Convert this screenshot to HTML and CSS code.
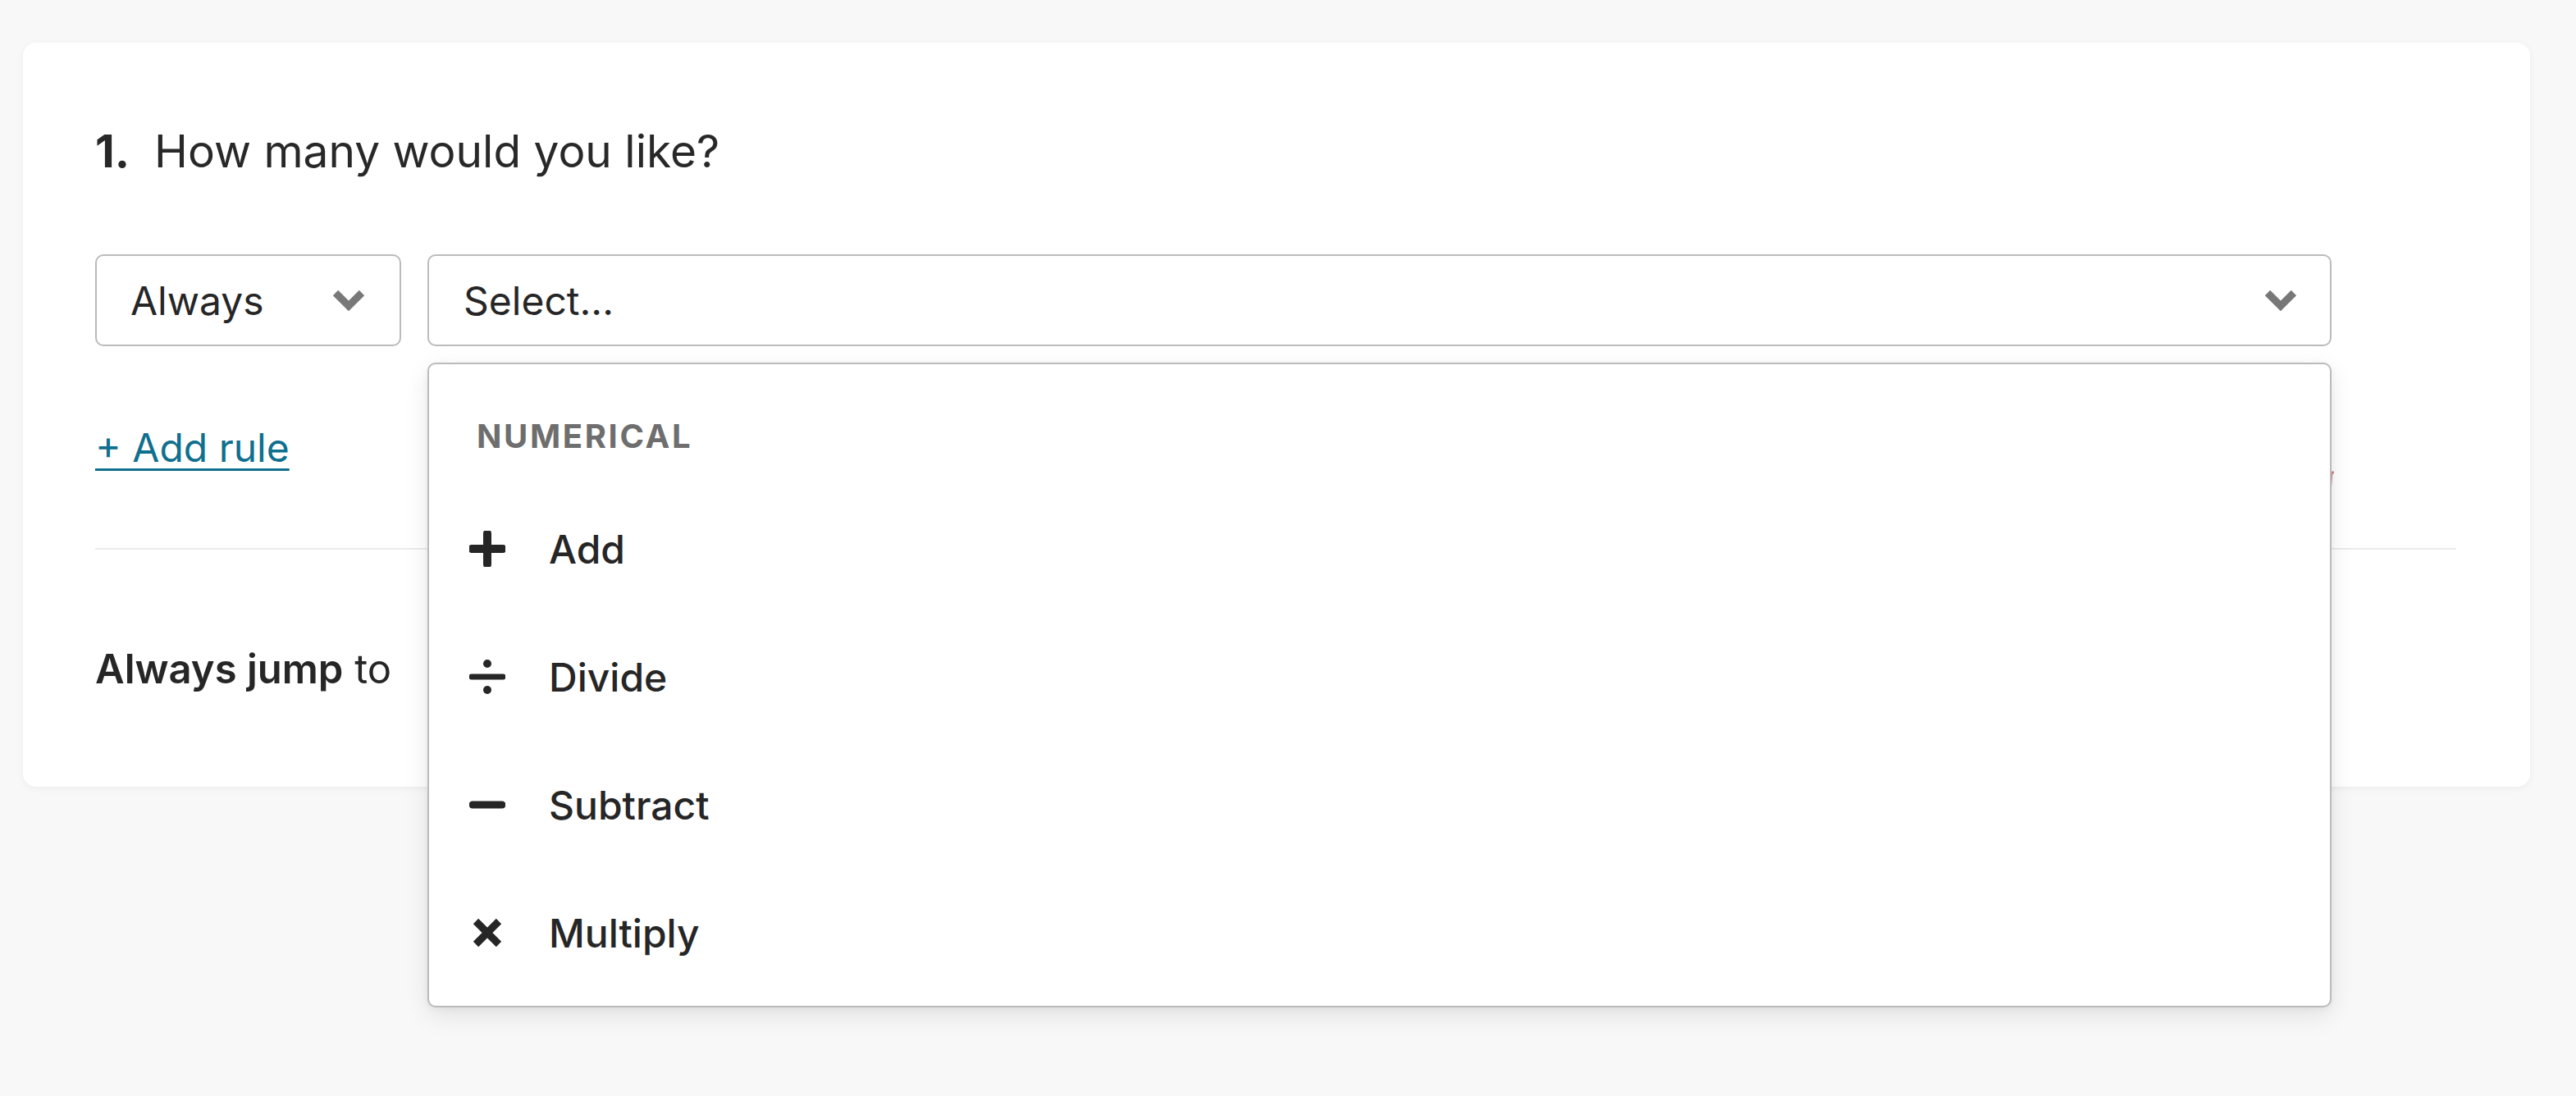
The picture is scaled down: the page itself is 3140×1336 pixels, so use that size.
FILE: index.html
```html
<!DOCTYPE html>
<html lang="en">
<head>
<meta charset="utf-8">
<title>Logic rules</title>
<link rel="stylesheet" href="styles.css">
</head>
<body>
<div class="page">
  <section class="card">
    <h2 class="question"><span class="num">1.</span>How many would you like?</h2>

    <div class="rule-row">
      <div class="select select-cond">
        <span class="select-label">Always</span>
        <svg class="chev" viewBox="0 0 42 28" aria-hidden="true"><polyline points="5,5 21,21 37,5"/></svg>
      </div>
      <div class="select-wrap">
        <div class="select select-action">
          <span class="select-label">Select...</span>
          <svg class="chev" viewBox="0 0 42 28" aria-hidden="true"><polyline points="5,5 21,21 37,5"/></svg>
        </div>
        <div class="menu">
          <div class="menu-group">Numerical</div>
          <div class="menu-item">
            <span class="menu-icon">
              <svg viewBox="0 0 44 44"><path d="M22 3 L22 41 M3 22 L41 22" class="ico-stroke"/></svg>
            </span>
            <span class="menu-text">Add</span>
          </div>
          <div class="menu-item">
            <span class="menu-icon">
              <svg viewBox="0 0 44 44"><circle cx="22" cy="6" r="5"/><circle cx="22" cy="38" r="5"/><path d="M3 22 L41 22" class="ico-stroke ico-thin"/></svg>
            </span>
            <span class="menu-text">Divide</span>
          </div>
          <div class="menu-item">
            <span class="menu-icon">
              <svg viewBox="0 0 44 44"><path d="M4 22 L40 22" class="ico-stroke ico-minus"/></svg>
            </span>
            <span class="menu-text">Subtract</span>
          </div>
          <div class="menu-item">
            <span class="menu-icon">
              <svg viewBox="0 0 44 44"><path d="M8 8 L36 36 M36 8 L8 36" class="ico-stroke ico-x"/></svg>
            </span>
            <span class="menu-text">Multiply</span>
          </div>
        </div>
      </div>
    </div>

    <div class="add-row">
      <a class="add-link" href="#">+ Add rule</a>
      <svg class="trash" viewBox="0 0 30 34" aria-hidden="true"><path d="M3 7 H27 M10 7 V3 H20 V7 M6 7 L8 31 H22 L24 7"/></svg>
    </div>

    <hr class="divider">

    <p class="jump"><strong>Always jump</strong> to</p>
  </section>
</div>
</body>
</html>
```

FILE: styles.css
```css
* { box-sizing: border-box; }

html {
  margin: 0;
  padding: 0;
  background: #f8f8f8;
}

body {
  margin: 0;
  padding: 0;
  min-height: 100vh;
  font-family: Inter, "Noto Sans", "Liberation Sans", sans-serif;
  color: #262626;
}

.page {
  padding: 52px 56px 0 28px;
  min-height: 100vh;
}

.card {
  position: relative;
  background: #ffffff;
  border-radius: 16px;
  box-shadow: 0 2px 10px rgba(0, 0, 0, 0.05);
  padding: 100px 90px 113px 88px;
}

.question {
  margin: 0;
  font-size: 55px;
  line-height: 64px;
  font-weight: 400;
  color: #282828;
}

.question .num {
  font-weight: 700;
  margin-right: 30px;
}

.rule-row {
  display: flex;
  gap: 32px;
  margin-top: 94px;
  width: 2726px;
  position: relative;
  z-index: 5;
}

.select {
  height: 112px;
  border: 2px solid #bbbbbb;
  border-radius: 10px;
  background: #fff;
  display: flex;
  align-items: center;
  justify-content: space-between;
  font-size: 48px;
  color: #262626;
}

.select-cond {
  width: 373px;
  flex: none;
  padding: 0 41px 0 41px;
}

.select-wrap {
  position: relative;
  flex: 1;
}

.select-action {
  padding: 0 39px 0 42px;
}

.chev {
  width: 42px;
  height: 28px;
  flex: none;
}

.chev polyline {
  fill: none;
  stroke: #787878;
  stroke-width: 9;
  stroke-linecap: butt;
  stroke-linejoin: miter;
}

.menu {
  position: absolute;
  top: 132px;
  left: 0;
  right: 0;
  height: 786px;
  background: #fff;
  border: 2px solid #bbbbbb;
  border-radius: 10px;
  box-shadow: 0 10px 30px rgba(0, 0, 0, 0.09), 0 2px 8px rgba(0, 0, 0, 0.05);
  padding-top: 60px;
}

.menu-group {
  padding-left: 58px;
  font-size: 40px;
  line-height: 56px;
  font-weight: 700;
  letter-spacing: 2.6px;
  text-transform: uppercase;
  color: #6e6e6e;
  margin-bottom: 31px;
}

.menu-item {
  height: 156px;
  display: flex;
  align-items: center;
  padding-left: 48px;
}

.menu-icon {
  width: 46px;
  height: 46px;
  display: flex;
  align-items: center;
  justify-content: center;
  margin-right: 52px;
}

.menu-icon svg {
  width: 44px;
  height: 44px;
  fill: #262626;
}

.ico-stroke {
  stroke: #262626;
  stroke-width: 10;
  stroke-linecap: round;
  fill: none;
}

.ico-thin {
  stroke-width: 7;
}

.ico-minus {
  stroke-width: 9;
}

.ico-x {
  stroke-width: 9;
  stroke-linecap: butt;
}

.menu-text {
  font-size: 48px;
  font-weight: 500;
  color: #262626;
}

.add-row {
  margin-top: 94px;
  height: 60px;
  display: flex;
  justify-content: space-between;
  align-items: center;
  width: 2732px;
}

.add-link {
  font-size: 48px;
  line-height: 60px;
  color: #0f6f8e;
  text-decoration: underline;
  text-decoration-thickness: 3px;
  text-underline-offset: 8px;
}

.trash {
  width: 30px;
  height: 34px;
  margin-top: 40px;
  margin-bottom: -40px;
}

.trash path {
  fill: none;
  stroke: #d08a8a;
  stroke-width: 3;
}

.divider {
  margin: 92px 0 0 0;
  border: 0;
  height: 2px;
  background: #ebebeb;
}

.jump {
  margin: 116px 0 0 0;
  font-size: 49px;
  line-height: 60px;
  color: #262626;
}

.jump strong {
  font-weight: 600;
}
```
